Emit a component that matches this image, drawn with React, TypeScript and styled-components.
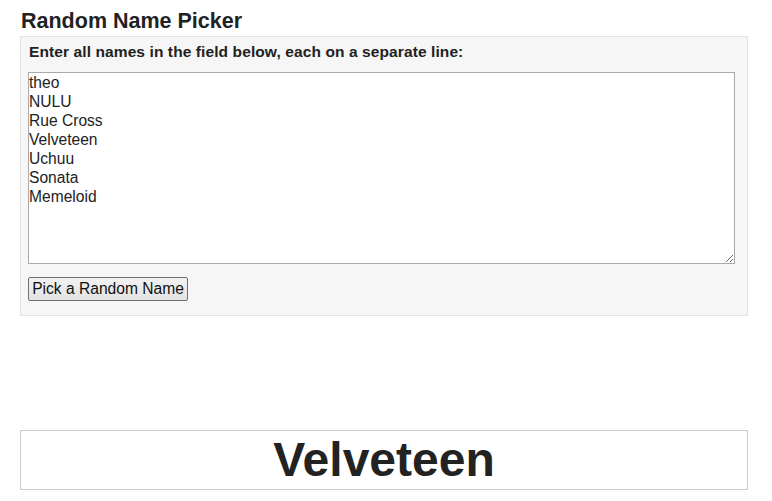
import React, { useState } from "react";
import styled, { createGlobalStyle } from "styled-components";

const Global = createGlobalStyle`
  html, body { margin: 0; padding: 0; background: #ffffff; }
  body { font-family: "Liberation Sans", Arial, sans-serif; color: #222222; }
`;

const Page = styled.div`
  padding: 10px 24px 0 20px;
  width: 728px;
`;

const Title = styled.h1`
  margin: 0 0 3px 1px;
  font-size: 21.5px;
  line-height: 23px;
  font-weight: bold;
  color: #222222;
`;

const Panel = styled.div`
  background: #f6f6f6;
  border: 1px solid #e3e3e3;
  padding: 6px 7px 14px 7px;
  display: flex;
  flex-direction: column;
  align-items: flex-start;
`;

const Label = styled.label`
  font-size: 15.5px;
  letter-spacing: 0.1px;
  font-weight: bold;
  line-height: 18px;
  margin: 0 0 11px 1px;
  color: #222222;
`;

const NamesArea = styled.textarea`
  box-sizing: border-box;
  width: 707px;
  height: 192px;
  margin: 0;
  padding: 0 1px 0 0;
  border: 1px solid #a9a9a9;
  background: #ffffff;
  font-family: "Liberation Sans", Arial, sans-serif;
  font-size: 15.6px;
  line-height: 19px;
  color: #222222;
  outline: none;
`;

const PickButton = styled.button`
  box-sizing: border-box;
  margin-top: 13px;
  width: 160px;
  height: 24px;
  padding: 0 1px;
  border: 1px solid #707070;
  border-radius: 2px;
  background: linear-gradient(#f2f2f2, #e3e3e3);
  font-family: "Liberation Sans", Arial, sans-serif;
  font-size: 15.6px;
  white-space: nowrap;
  color: #111111;
  cursor: pointer;
`;

const Spacer = styled.div`
  height: 114px;
`;

const Result = styled.div`
  box-sizing: border-box;
  height: 60px;
  border: 1px solid #cccccc;
  background: #ffffff;
  display: flex;
  align-items: center;
  justify-content: center;
  font-size: 48px;
  font-weight: bold;
  color: #222222;
  line-height: 1;
`;

const initialNames = ["theo", "NULU", "Rue Cross", "Velveteen", "Uchuu", "Sonata", "Memeloid"].join("\n");

export default function App() {
  const [names, setNames] = useState(initialNames);
  const [picked, setPicked] = useState("Velveteen");
  const pick = () => {
    const list = names.split("\n").map((n) => n.trim()).filter(Boolean);
    if (list.length) setPicked(list[Math.floor(Math.random() * list.length)]);
  };
  return (
    <>
      <Global />
      <Page>
        <Title>Random Name Picker</Title>
        <Panel>
          <Label htmlFor="names">Enter all names in the field below, each on a separate line:</Label>
          <NamesArea id="names" value={names} onChange={(e) => setNames(e.target.value)} />
          <PickButton onClick={pick}>Pick a Random Name</PickButton>
        </Panel>
        <Spacer />
        <Result>{picked}</Result>
      </Page>
    </>
  );
}
